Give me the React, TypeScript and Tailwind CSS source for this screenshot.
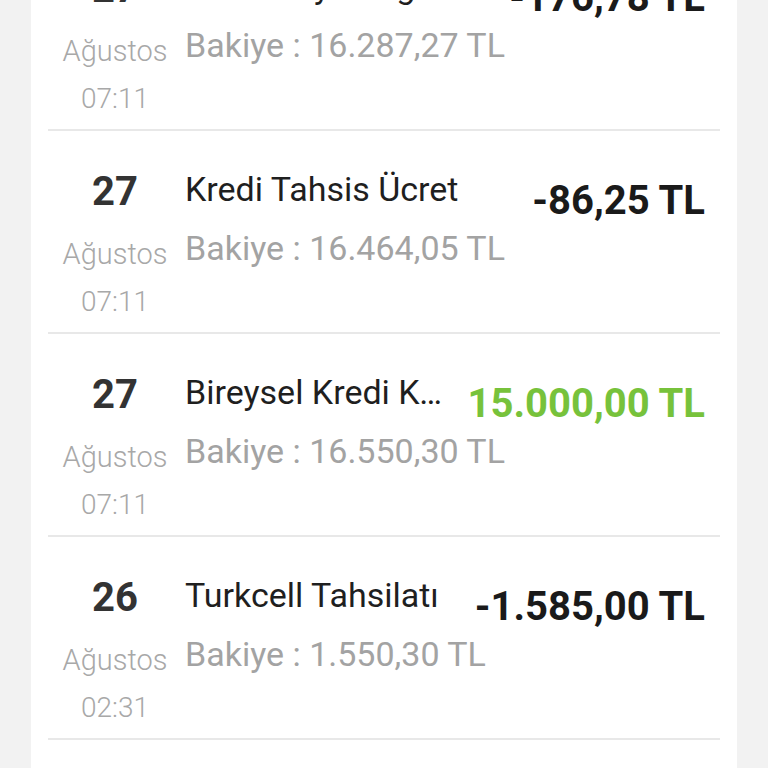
import React from "react";

type Tx = { day: string; month: string; time: string; title: string; balance: string; amount: string; positive?: boolean };

const rows: Tx[] = [
  { day: "27", month: "Ağustos", time: "07:11", title: "Kredi Hayat Sigortası", balance: "Bakiye : 16.287,27 TL", amount: "-176,78 TL" },
  { day: "27", month: "Ağustos", time: "07:11", title: "Kredi Tahsis Ücret", balance: "Bakiye : 16.464,05 TL", amount: "-86,25 TL" },
  { day: "27", month: "Ağustos", time: "07:11", title: "Bireysel Kredi Kullandırım", balance: "Bakiye : 16.550,30 TL", amount: "15.000,00 TL", positive: true },
  { day: "26", month: "Ağustos", time: "02:31", title: "Turkcell Tahsilatı", balance: "Bakiye : 1.550,30 TL", amount: "-1.585,00 TL" },
  { day: "26", month: "Ağustos", time: "01:10", title: "Para Transferi", balance: "Bakiye : 3.135,30 TL", amount: "-500,00 TL" },
];

export default function App() {
  return (
    <div className="h-[768px] overflow-hidden bg-[#f2f2f2]" style={{ fontFamily: "Roboto, 'Noto Sans', sans-serif" }}>
      <div className="mx-[31px] -mt-[72px] bg-white px-[17px]">
        {rows.map((r, i) => (
          <div key={i} className="flex h-[203px] border-b-2 border-[#e8e8e8]">
            <div className="w-[134px] shrink-0 text-center">
              <div className="pt-[37px] text-[40px] font-bold leading-[48px] text-[#333333]">{r.day}</div>
              <div className="mt-[15px] text-[29px] font-light leading-[47px] text-[#a8a8a8]">{r.month}</div>
              <div className="text-[28px] font-light leading-[47px] text-[#a8a8a8]">{r.time}</div>
            </div>
            <div className="ml-[3px] min-w-0 flex-1">
              <div className="flex items-start">
                <div className="min-w-0 flex-1 truncate pt-[38px] text-[34px] leading-[40px] text-[#1f1f1f]">{r.title}</div>
                <div className={`shrink-0 pl-[14px] pr-[15px] pt-[47px] text-[40px] font-bold leading-[46px] ${r.positive ? "text-[#77c23b]" : "text-[#1a1a1a]"}`}>
                  {r.amount}
                </div>
              </div>
              <div className="mt-[4px] whitespace-nowrap text-[34px] leading-[40px] text-[#a3a3a3]">{r.balance}</div>
            </div>
          </div>
        ))}
      </div>
    </div>
  );
}
